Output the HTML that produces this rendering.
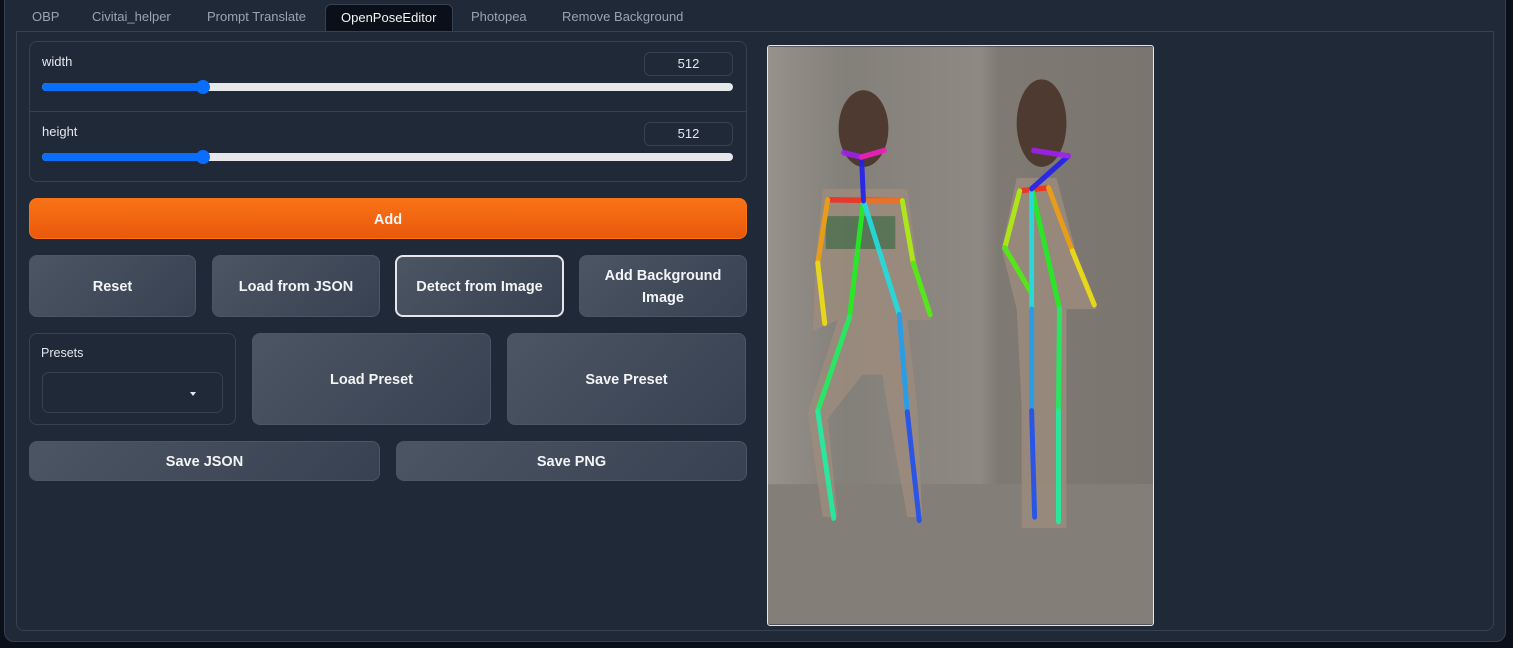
<!DOCTYPE html>
<html><head><meta charset="utf-8"><style>
*{box-sizing:border-box;margin:0;padding:0}
body{width:1513px;height:648px;background:#0b0f19;font-family:"Liberation Sans",sans-serif;overflow:hidden;position:relative}
.card{position:absolute;left:4px;top:-10px;width:1502px;height:652px;background:#1f2937;border:1px solid #374151;border-radius:10px}
.tab{position:absolute;top:4px;height:27px;font-size:13px;color:#9ca3af;line-height:25px}
.tab.act{background:#0b0f19;color:#f3f4f6;border:1px solid #374151;border-bottom:none;border-radius:6px 6px 0 0;padding:0 15px;left:325px;width:128px}
.panel{position:absolute;left:16px;top:31px;width:1478px;height:600px;border:1px solid #374151;border-radius:0 0 8px 8px}
.box{position:absolute;border:1px solid #374151;border-radius:8px}
.lbl{position:absolute;font-size:13px;color:#e5e7eb}
.num{position:absolute;width:89px;height:24px;border:1px solid #374151;border-radius:6px;font-size:13px;color:#e5e7eb;text-align:center;line-height:22px}
.track{position:absolute;height:8px;border-radius:4px;background:#e5e7eb}
.track i{position:absolute;left:0;top:0;height:8px;background:#0a6efd;border-radius:4px}
.thumb{position:absolute;width:14px;height:14px;border-radius:7px;background:#0a6efd}
.btn{position:absolute;border:1px solid #4b5563;border-radius:8px;background:linear-gradient(135deg,#4b5563,#374151);color:#f3f4f6;font-weight:bold;font-size:14.5px;display:flex;align-items:center;justify-content:center;text-align:center;line-height:22px;padding-top:2px}
</style></head><body>
<div class="card"></div>
<div class="tab" style="left:32px">OBP</div>
<div class="tab" style="left:92px">Civitai_helper</div>
<div class="tab" style="left:207px">Prompt Translate</div>
<div class="tab act">OpenPoseEditor</div>
<div class="tab" style="left:471px">Photopea</div>
<div class="tab" style="left:562px">Remove Background</div>
<div class="panel"></div>
<div class="box" style="left:29px;top:41px;width:718px;height:141px"></div>
<div style="position:absolute;left:29px;top:111px;width:718px;height:1px;background:#374151"></div>
<div class="lbl" style="left:42px;top:54px">width</div>
<div class="num" style="left:644px;top:52px">512</div>
<div class="track" style="left:42px;top:83px;width:691px"><i style="width:160px"></i></div>
<div class="thumb" style="left:196px;top:80px"></div>
<div class="lbl" style="left:42px;top:124px">height</div>
<div class="num" style="left:644px;top:122px">512</div>
<div class="track" style="left:42px;top:153px;width:691px"><i style="width:160px"></i></div>
<div class="thumb" style="left:196px;top:150px"></div>
<div class="btn" style="left:29px;top:198px;width:718px;height:41px;background:linear-gradient(180deg,#f97316,#ea580c);border-color:#f97316">Add</div>
<div class="btn" style="left:29px;top:255px;width:167px;height:62px">Reset</div>
<div class="btn" style="left:212px;top:255px;width:168px;height:62px">Load from JSON</div>
<div class="btn" style="left:395px;top:255px;width:169px;height:62px;border:2px solid #e5e7eb">Detect from Image</div>
<div class="btn" style="left:579px;top:255px;width:168px;height:62px">Add Background<br>Image</div>
<div class="box" style="left:29px;top:333px;width:207px;height:92px"></div>
<div class="lbl" style="left:41px;top:346px;font-size:12.5px">Presets</div>
<div class="box" style="left:42px;top:372px;width:181px;height:41px;border-radius:7px"></div>
<div style="position:absolute;left:190px;top:392px;width:0;height:0;border-left:3.5px solid transparent;border-right:3.5px solid transparent;border-top:4px solid #e5e7eb"></div>
<div class="btn" style="left:252px;top:333px;width:239px;height:92px">Load Preset</div>
<div class="btn" style="left:507px;top:333px;width:239px;height:92px">Save Preset</div>
<div class="btn" style="left:29px;top:441px;width:351px;height:40px">Save JSON</div>
<div class="btn" style="left:396px;top:441px;width:351px;height:40px">Save PNG</div>
<svg style="position:absolute;left:767px;top:45px;border:1px solid #e5e7eb;border-radius:3px" width="387" height="581" viewBox="0 0 387 581">
<defs><linearGradient id="bg" x1="0" y1="0" x2="1" y2="0"><stop offset="0" stop-color="#96928b"/><stop offset=".2" stop-color="#837f79"/><stop offset=".55" stop-color="#8e8a83"/><stop offset=".6" stop-color="#7e7a73"/><stop offset="1" stop-color="#7a766f"/></linearGradient></defs>
<rect width="387" height="581" fill="url(#bg)"/>
<rect y="440" width="387" height="141" fill="#837e77"/>
<g transform="scale(1,1.1)">
<g fill="#9e8c7e" opacity=".8">
<polygon points="55,130 140,130 150,200 165,250 140,250 150,330 155,430 140,430 120,330 115,300 95,300 60,340 70,430 55,430 40,335 70,250 45,260 48,195"/>
<polygon points="250,120 290,120 310,190 330,240 300,240 300,330 300,440 255,440 255,330 250,240 235,185"/>
</g>
<rect x="58" y="155" width="70" height="30" fill="#4a6e4e" opacity=".8"/>
<ellipse cx="96" cy="75" rx="25" ry="35" fill="#4e3a30"/><ellipse cx="275" cy="70" rx="25" ry="40" fill="#4e3a30"/>
<g stroke-linecap="round" stroke-width="5" opacity=".9" fill="none">
<line x1="60" y1="140" x2="135" y2="141" stroke="#f03020"/><line x1="96" y1="141" x2="135" y2="141" stroke="#f07020"/>
<line x1="60" y1="140" x2="50" y2="198" stroke="#f0a010"/><line x1="50" y1="198" x2="57" y2="253" stroke="#f0e010"/>
<line x1="135" y1="141" x2="146" y2="198" stroke="#b0f010"/><line x1="146" y1="198" x2="163" y2="245" stroke="#50f010"/>
<line x1="96" y1="141" x2="82" y2="247" stroke="#20f020"/><line x1="82" y1="247" x2="50" y2="333" stroke="#20f060"/><line x1="50" y1="333" x2="66" y2="431" stroke="#20f0a0"/>
<line x1="96" y1="141" x2="132" y2="245" stroke="#20e0e0"/><line x1="132" y1="245" x2="140" y2="334" stroke="#20a0f0"/><line x1="140" y1="334" x2="152" y2="433" stroke="#2050f0"/>
<line x1="96" y1="141" x2="94" y2="101" stroke="#2020f0"/><line x1="94" y1="101" x2="76" y2="97" stroke="#a020f0"/><line x1="94" y1="101" x2="117" y2="95" stroke="#f020c0"/>
<line x1="253" y1="132" x2="282" y2="129" stroke="#f03020"/>
<line x1="253" y1="132" x2="238" y2="184" stroke="#b0f010"/><line x1="238" y1="184" x2="264" y2="224" stroke="#50f010"/>
<line x1="282" y1="129" x2="306" y2="187" stroke="#f0a010"/><line x1="306" y1="187" x2="328" y2="236" stroke="#f0e010"/>
<line x1="265" y1="130" x2="293" y2="239" stroke="#20f020"/><line x1="293" y1="239" x2="292" y2="333" stroke="#20f060"/><line x1="292" y1="333" x2="292" y2="434" stroke="#20f0a0"/>
<line x1="265" y1="130" x2="265" y2="240" stroke="#20e0e0"/><line x1="265" y1="240" x2="265" y2="333" stroke="#20a0f0"/><line x1="265" y1="333" x2="268" y2="430" stroke="#2050f0"/>
<line x1="265" y1="130" x2="302" y2="100" stroke="#2020f0"/><line x1="302" y1="100" x2="267" y2="95" stroke="#a020f0"/>
</g>
</g>
</svg>
</body></html>
